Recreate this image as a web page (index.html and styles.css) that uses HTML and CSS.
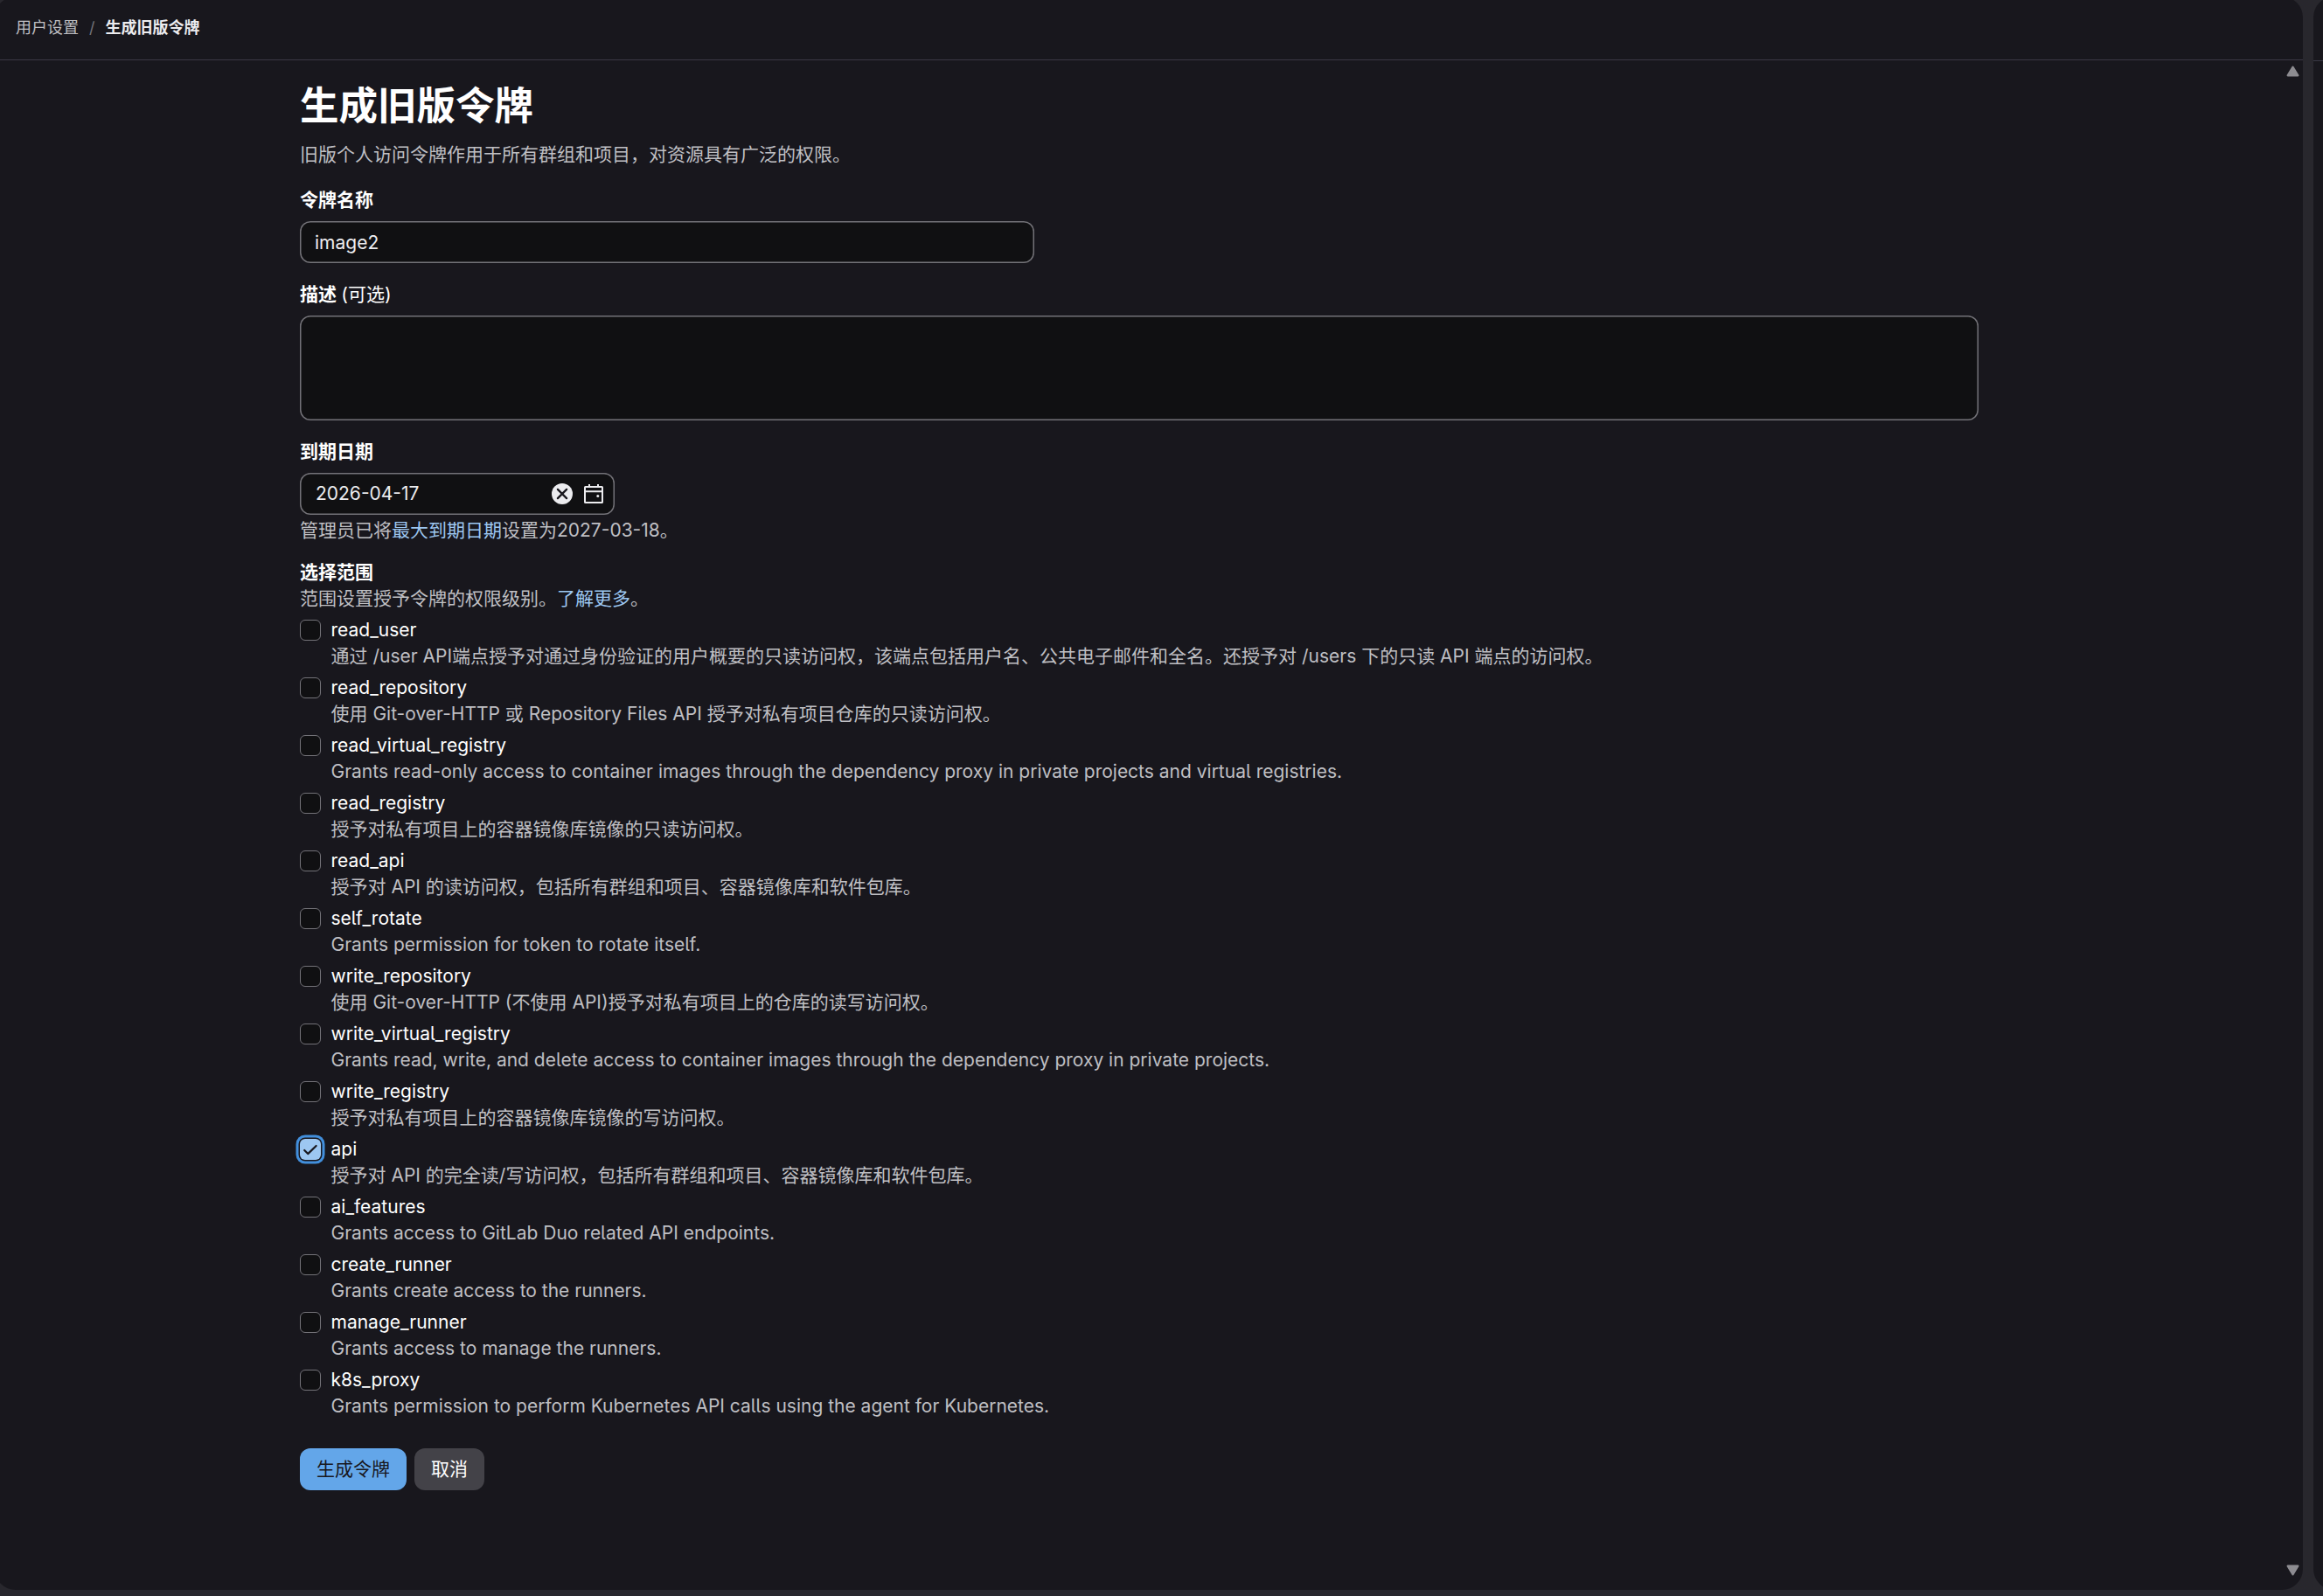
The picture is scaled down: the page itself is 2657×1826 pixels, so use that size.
FILE: index.html
```html
<!DOCTYPE html>
<html lang="zh-CN">

<head>
    <meta charset="UTF-8">
    <meta name="viewport" content="width=device-width, initial-scale=1.0">
    <title>生成旧版令牌</title>
    <link rel="stylesheet" href="styles.css">
</head>

<body>
    <div class="panel main-panel">
        <header class="top-bar">
            <nav class="breadcrumb">
                <a href="#">用户设置</a>
                <span class="separator">/</span>
                <strong>生成旧版令牌</strong>
            </nav>
        </header>

        <div class="panel-body">
            <form class="token-form">
                <h1>生成旧版令牌</h1>
                <p class="intro">旧版个人访问令牌作用于所有群组和项目，对资源具有广泛的权限。</p>

                <div class="form-group">
                    <label for="name">令牌名称</label>
                    <input class="text-input name-input" type="text" id="name" value="image2">
                </div>

                <div class="form-group">
                    <label for="description">描述 <span class="optional">(可选)</span></label>
                    <textarea class="text-input description-input" id="description"></textarea>
                </div>

                <div class="form-group expiry">
                    <label for="expires">到期日期</label>
                    <div class="text-input date-input">
                        <input type="text" id="expires" value="2026-04-17">
                        <svg class="icon-clear" viewBox="0 0 24 24">
                            <circle cx="12" cy="12" r="12" fill="#ececef" />
                            <path d="M6.9 6.9l10.2 10.2M17.1 6.9L6.9 17.1" stroke="#18171d" stroke-width="2.3" stroke-linecap="round" />
                        </svg>
                        <svg class="icon-calendar" viewBox="0 0 24 24" fill="none" stroke="#ececef" stroke-width="2">
                            <rect x="2" y="4" width="20" height="18" rx="0.6" />
                            <path d="M7 1v3M17 1v3M2 9.2h20" />
                            <circle cx="16.8" cy="14.5" r="1.5" fill="#ececef" stroke="none" />
                        </svg>
                    </div>
                    <p class="help">管理员已将<a href="#">最大到期日期</a>设置为2027-03-18。</p>
                </div>

                <fieldset class="scopes">
                    <legend>选择范围</legend>
                    <p class="help">范围设置授予令牌的权限级别。<a href="#">了解更多</a>。</p>

                    <div class="scope-list">
                        <label class="scope">
                            <input type="checkbox">
                            <span>read_user</span>
                            <span class="help">通过 /user API端点授予对通过身份验证的用户概要的只读访问权，该端点包括用户名、公共电子邮件和全名。还授予对 /users 下的只读 API 端点的访问权。</span>
                        </label>
                        <label class="scope">
                            <input type="checkbox">
                            <span>read_repository</span>
                            <span class="help">使用 Git-over-HTTP 或 Repository Files API 授予对私有项目仓库的只读访问权。</span>
                        </label>
                        <label class="scope">
                            <input type="checkbox">
                            <span>read_virtual_registry</span>
                            <span class="help">Grants read-only access to container images through the dependency proxy in private projects and virtual registries.</span>
                        </label>
                        <label class="scope">
                            <input type="checkbox">
                            <span>read_registry</span>
                            <span class="help">授予对私有项目上的容器镜像库镜像的只读访问权。</span>
                        </label>
                        <label class="scope">
                            <input type="checkbox">
                            <span>read_api</span>
                            <span class="help">授予对 API 的读访问权，包括所有群组和项目、容器镜像库和软件包库。</span>
                        </label>
                        <label class="scope">
                            <input type="checkbox">
                            <span>self_rotate</span>
                            <span class="help">Grants permission for token to rotate itself.</span>
                        </label>
                        <label class="scope">
                            <input type="checkbox">
                            <span>write_repository</span>
                            <span class="help">使用 Git-over-HTTP (不使用 API)授予对私有项目上的仓库的读写访问权。</span>
                        </label>
                        <label class="scope">
                            <input type="checkbox">
                            <span>write_virtual_registry</span>
                            <span class="help">Grants read, write, and delete access to container images through the dependency proxy in private projects.</span>
                        </label>
                        <label class="scope">
                            <input type="checkbox">
                            <span>write_registry</span>
                            <span class="help">授予对私有项目上的容器镜像库镜像的写访问权。</span>
                        </label>
                        <label class="scope">
                            <span class="check-box">
                                <svg viewBox="0 0 24 24" fill="none">
                                    <path d="M5.2 13l4 4.1L18.6 8" stroke="#18171d" stroke-width="2.2" stroke-linecap="round" stroke-linejoin="round" />
                                </svg>
                            </span>
                            <span>api</span>
                            <span class="help">授予对 API 的完全读/写访问权，包括所有群组和项目、容器镜像库和软件包库。</span>
                        </label>
                        <label class="scope">
                            <input type="checkbox">
                            <span>ai_features</span>
                            <span class="help">Grants access to GitLab Duo related API endpoints.</span>
                        </label>
                        <label class="scope">
                            <input type="checkbox">
                            <span>create_runner</span>
                            <span class="help">Grants create access to the runners.</span>
                        </label>
                        <label class="scope">
                            <input type="checkbox">
                            <span>manage_runner</span>
                            <span class="help">Grants access to manage the runners.</span>
                        </label>
                        <label class="scope">
                            <input type="checkbox">
                            <span>k8s_proxy</span>
                            <span class="help">Grants permission to perform Kubernetes API calls using the agent for Kubernetes.</span>
                        </label>
                    </div>
                </fieldset>

                <div class="actions">
                    <button type="button" class="btn btn-confirm">生成令牌</button>
                    <button type="button" class="btn btn-cancel">取消</button>
                </div>
            </form>

            <div class="scrollbar">
                <svg viewBox="0 0 14 12"><path d="M7 1.5L12.5 10.5H1.5z" /></svg>
                <svg viewBox="0 0 14 12"><path d="M7 10.5L1.5 1.5H12.5z" /></svg>
            </div>
        </div>
    </div>

    <div class="panel side-panel">
        <div class="top-bar"></div>
    </div>
</body>

</html>
```
FILE: styles.css
```css
* {
    box-sizing: border-box;
}

body {
    margin: 0;
    height: 1826px;
    display: flex;
    gap: 12px;
    overflow: hidden;
    background: #28272d;
    color: #fff;
    font-family: Inter, "Noto Sans CJK SC", sans-serif;
    font-feature-settings: "cv05";
    font-size: 21px;
    line-height: 30px;
}

h1,
p {
    margin: 0;
}

a {
    color: #9dc7f1;
    text-decoration: none;
}

.panel {
    height: 1823px;
    margin-top: -4px;
    background: #18171d;
    border-radius: 24px;
    flex-shrink: 0;
    overflow: hidden;
}

.main-panel {
    width: 2640px;
    margin-left: -6px;
    display: flex;
    flex-direction: column;
}

.side-panel {
    width: 60px;
}

.top-bar {
    height: 73px;
    padding: 21px 24px;
    border-bottom: 1px solid #3a3845;
}

.side-panel .top-bar {
    height: 74px;
}

.breadcrumb {
    display: flex;
    align-items: center;
    font-size: 18px;
    color: #ececef;
}

.breadcrumb a {
    color: #bfbfc3;
}

.separator {
    margin: 0 12px;
    color: #737278;
}

.panel-body {
    flex: 1;
    display: flex;
    justify-content: space-between;
    padding-left: 349px;
}

.token-form {
    width: 1920px;
    padding-top: 25px;
}

h1 {
    font-size: 44.5px;
    line-height: 54px;
    font-weight: 600;
    margin-bottom: 14px;
}

.intro {
    color: #bfbfc3;
    margin-bottom: 22px;
}

.form-group {
    margin-bottom: 21px;
}

.form-group > label {
    display: block;
    margin-bottom: 9px;
    font-weight: 600;
}

.form-group .optional {
    font-weight: 400;
}

.text-input {
    display: block;
    background: #101012;
    color: #ececef;
    border: none;
    box-shadow: inset 0 0 0 1.5px #737278;
    border-radius: 12px;
    font: inherit;
}

.name-input {
    width: 840px;
    height: 48px;
    padding: 0 17px;
}

.description-input {
    width: 100%;
    height: 120px;
    resize: none;
}

.date-input {
    display: flex;
    align-items: center;
    width: 360px;
    height: 48px;
    padding: 0 12px 0 18px;
}

.date-input input {
    flex: 1;
    min-width: 0;
    padding: 0;
    border: none;
    background: transparent;
    color: inherit;
    font: inherit;
}

.icon-clear,
.icon-calendar {
    width: 24px;
    height: 24px;
    margin-left: 12px;
}

.help {
    color: #bfbfc3;
}

.expiry {
    margin-bottom: 18px;
}

.expiry .help {
    margin-top: 3px;
}

.scopes {
    margin: 0;
    padding: 0;
    border: none;
}

legend {
    padding: 0;
    font-weight: 600;
}

.scope-list {
    display: grid;
    gap: 6px;
    margin-top: 6px;
}

.scope {
    display: grid;
    grid-template-columns: 24px 1fr;
    column-gap: 11.5px;
}

.scope .help {
    grid-column: 2;
}

.scope input,
.check-box {
    appearance: none;
    width: 24px;
    height: 24px;
    margin: 3px 0 0;
    background: #101012;
    border: 1px solid #737278;
    border-radius: 6px;
}

.scope .check-box {
    display: block;
    background: #9dc7f1;
    border: none;
    box-shadow: 0 0 0 1.5px #18171d, 0 0 0 4.5px #428fdc;
}

.check-box svg {
    display: block;
}

.actions {
    display: flex;
    gap: 9px;
    margin-top: 33px;
}

.btn {
    height: 48px;
    padding: 0 19px;
    border: none;
    border-radius: 12px;
    font: inherit;
    color: #fff;
}

.btn-confirm {
    background: #63a6e9;
    color: #18171d;
}

.btn-cancel {
    background: #434248;
}

/* scroll arrows on the right edge */
.scrollbar {
    display: flex;
    flex-direction: column;
    justify-content: space-between;
    padding: 6px 4px 16px 0;
}

.scrollbar svg {
    width: 15px;
    height: 13px;
    fill: #8d8c91;
    stroke: #8d8c91;
    stroke-width: 2;
    stroke-linejoin: round;
}
```
